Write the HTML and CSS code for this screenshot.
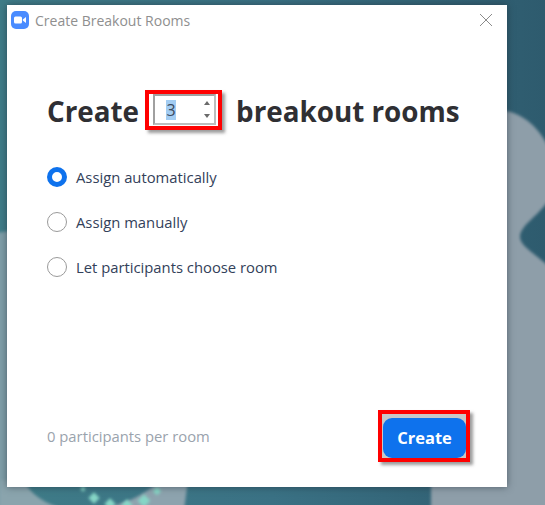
FILE: index.html
```html
<!DOCTYPE html>
<html lang="en">
<head>
<meta charset="utf-8">
<title>Create Breakout Rooms</title>
<link rel="stylesheet" href="styles.css">
</head>
<body>
<div class="desktop">
  <svg class="wallpaper" width="545" height="505" viewBox="0 0 545 505" aria-hidden="true">
    <defs>
      <linearGradient id="teal" x1="0" y1="0" x2="1" y2="0">
        <stop offset="0" stop-color="#3f7c88"/>
        <stop offset="0.5" stop-color="#3a7184"/>
        <stop offset="1" stop-color="#2e5b6e"/>
      </linearGradient>
      <filter id="soft"><feGaussianBlur stdDeviation="1.5"/></filter>
    </defs>
    <rect width="545" height="505" fill="url(#teal)"/>
    <g filter="url(#soft)">
      <path d="M-5 233 C3 232 8 230 14 232 L14 510 L-5 510 Z" fill="#7f9ea8"/>
      <path d="M495 110 C520 110 538 125 550 150 L550 198 C540 215 520 225 520 237 C520 247 538 255 550 268 L550 510 L495 510 Z" fill="#8e9ea9"/>
      <path d="M0 480 H24 C30 495 45 503 65 510 H0 Z" fill="#8aa4ad"/>
      <path d="M95 510 C125 505 145 495 160 480 H188 L184 510 Z" fill="#8da3ae"/>
      <path d="M431 480 H510 V510 H431 Z" fill="#8e9ea9"/>
    </g>
    <g fill="#86d6c6" filter="url(#soft)">
      <rect x="90" y="494" width="8" height="8" transform="rotate(45 94 498)"/>
      <rect x="140" y="496" width="9" height="9" transform="rotate(45 144 500)"/>
      <rect x="154" y="488" width="6" height="6" transform="rotate(45 157 491)"/>
      <rect x="106" y="500" width="8" height="8" transform="rotate(45 110 504)"/>
      <rect x="123" y="501" width="8" height="8" transform="rotate(45 127 505)"/>
      <rect x="81" y="487" width="4" height="4" transform="rotate(45 83 489)"/>
    </g>
  </svg>

  <main class="dialog">
    <header class="titlebar">
      <svg class="app-icon" width="18" height="18" viewBox="0 0 18 18" aria-hidden="true">
        <rect width="18" height="18" rx="5" fill="#4a8cff"/>
        <rect x="3" y="5.5" width="8" height="7" rx="1.5" fill="#fff"/>
        <path d="M11.8 8.4 L15 6 V12 L11.8 9.6 Z" fill="#fff"/>
      </svg>
      <span class="window-title">Create Breakout Rooms</span>
      <svg class="close" width="14" height="14" viewBox="0 0 14 14" aria-hidden="true">
        <path d="M1 1 L13 13 M13 1 L1 13" stroke="#8b8b8b" stroke-width="1" fill="none"/>
      </svg>
    </header>

    <h1 class="heading">
      <span class="heading-text">Create</span>
      <span class="spinner-mark">
        <span class="spinner">
          <span class="spinner-value">3</span>
          <span class="arrows"><i class="arrow-up"></i><i class="arrow-down"></i></span>
        </span>
      </span>
      <span class="heading-text">breakout rooms</span>
    </h1>

    <ul class="options">
      <li class="option"><span class="radio radio-on"></span>Assign automatically</li>
      <li class="option"><span class="radio"></span>Assign manually</li>
      <li class="option"><span class="radio"></span>Let participants choose room</li>
    </ul>

    <footer class="footer">
      <span class="per-room">0 participants per room</span>
      <span class="button-mark"><span class="create">Create</span></span>
    </footer>
  </main>
</div>
</body>
</html>
```

FILE: styles.css
```css
* { box-sizing: border-box; }
html, body { margin: 0; padding: 0; }
body { width: 545px; height: 505px; overflow: hidden; font-family: "Open Sans", "Noto Sans", sans-serif; }

.desktop { position: relative; width: 545px; height: 505px; overflow: hidden; }
.wallpaper { position: absolute; left: 0; top: 0; display: block; }

.dialog {
  position: absolute; left: 7px; top: 5px; width: 500px; height: 482px;
  background: #fff;
  box-shadow: 0 0 7px rgba(30, 40, 50, .55);
  display: flex; flex-direction: column;
}

.titlebar { display: flex; align-items: center; height: 32px; padding: 0 14px 2px 4px; }
.app-icon { flex: none; margin-right: 6px; }
.window-title { font-size: 14px; color: #8f8f8f; flex: 1; }
.close { flex: none; }

.heading {
  display: flex; align-items: center; margin: 52px 0 0; padding-left: 40px;
  font-size: 27.8px; line-height: 40px; font-weight: 700; color: #2f2f33;
}
.heading-text { padding-top: 2px; }

.spinner-mark {
  width: 77px; height: 40px; margin: 0 14px 0 6px; padding: 0 2px 0 4px;
  border: 4px solid #f00; background: #fff;
  box-shadow: 3px 3px 3px rgba(60, 60, 60, .5);
  display: flex; align-items: flex-start;
}
.spinner {
  flex: 1; height: 31px; border: 2px solid #a0a0a0; border-right-color: #bdbdbd;
  border-bottom-color: #bdbdbd;
  display: flex; align-items: center; justify-content: space-between; padding: 0 4px 0 11px;
}
.spinner-value {
  font-size: 16px; line-height: 20px; font-weight: 400; color: #3c4a5c;
  background: #a3cdf3; width: 10px; text-align: center;
}
.arrows { display: flex; flex-direction: column; gap: 9px; }
.arrows i { display: block; width: 0; height: 0; border-left: 3px solid transparent; border-right: 3px solid transparent; }
.arrows .arrow-up { border-bottom: 4px solid #6a6a6a; }
.arrows .arrow-down { border-top: 4px solid #6a6a6a; }

.options { list-style: none; margin: 36px 0 0; padding: 0 0 0 40px; display: flex; flex-direction: column; gap: 25px; }
.option { display: flex; align-items: center; height: 20px; font-size: 14.8px; color: #33415a; }
.radio { width: 20px; height: 20px; margin-right: 9px; border: 1.5px solid #9a9a9a; border-radius: 50%; background: #fff; flex: none; }
.radio-on { border: 5.5px solid #0e72ed; }

.footer {
  margin-top: auto; display: flex; align-items: center; justify-content: space-between;
  padding: 0 37px 25px 40px;
}
.per-room { font-size: 14.8px; color: #9aa3ad; }
.button-mark {
  width: 92px; height: 52px; border: 4px solid #f00; background: #c8c8c8;
  box-shadow: 3px 3px 3px rgba(60, 60, 60, .5);
  display: flex; padding: 4px 0 0 1px;
}
.create {
  width: 83px; height: 40px; padding-bottom: 2px; border-radius: 9px; background: #0e72ed; color: #fff;
  font-size: 16.5px; font-weight: 700; display: flex; align-items: center; justify-content: center;
}
```
